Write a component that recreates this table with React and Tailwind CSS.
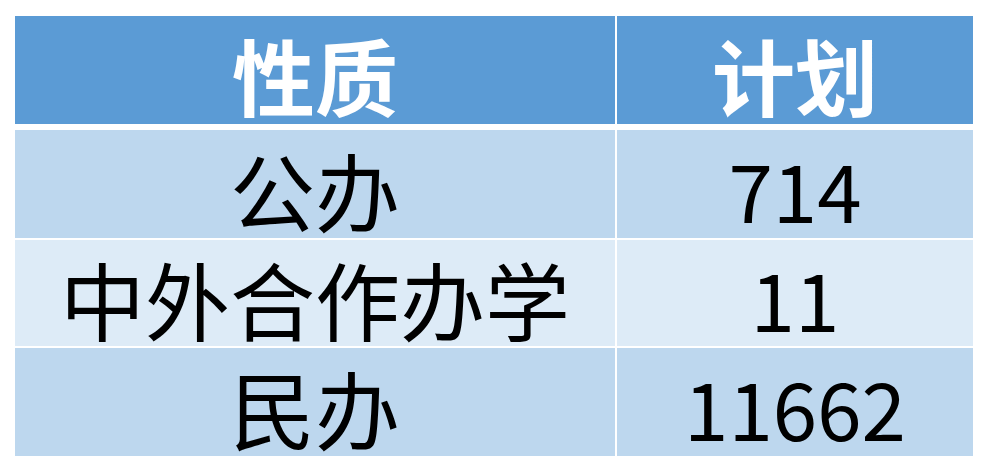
export default function App() {
  const rows = [
    ["公办", "714", "bg-[#bdd7ee]", "h-[108px]"],
    ["中外合作办学", "11", "bg-[#ddebf7]", "h-[106px]"],
    ["民办", "11662", "bg-[#bdd7ee]", "h-[108px]"],
  ];
  return (
    <div className="w-[988px] h-[471px] bg-white pt-[16px] pl-[15px]" style={{ fontFamily: '"Noto Sans CJK SC", "Noto Sans", sans-serif' }}>
      <div className="flex flex-col w-[958px]">
        <div className="flex gap-[2px] h-[108px] mb-[6px]">
          <div className="w-[600px] bg-[#5b9bd5] flex items-center justify-center text-white font-bold text-[83px] leading-none pt-[8px]">性质</div>
          <div className="w-[356px] bg-[#5b9bd5] flex items-center justify-center text-white font-bold text-[83px] leading-none pt-[8px]">计划</div>
        </div>
        <div className="flex flex-col gap-[2px]">
          {rows.map(([a, b, bg, h]) => (
            <div key={a} className={`flex gap-[2px] ${h}`}>
              <div className={`w-[600px] ${bg} flex items-center justify-center text-black text-[85px] leading-none pt-[8px]`}>{a}</div>
              <div className={`w-[356px] ${bg} flex items-center justify-center text-black text-[80px] leading-none pt-[8px]`}>{b}</div>
            </div>
          ))}
        </div>
      </div>
    </div>
  );
}
